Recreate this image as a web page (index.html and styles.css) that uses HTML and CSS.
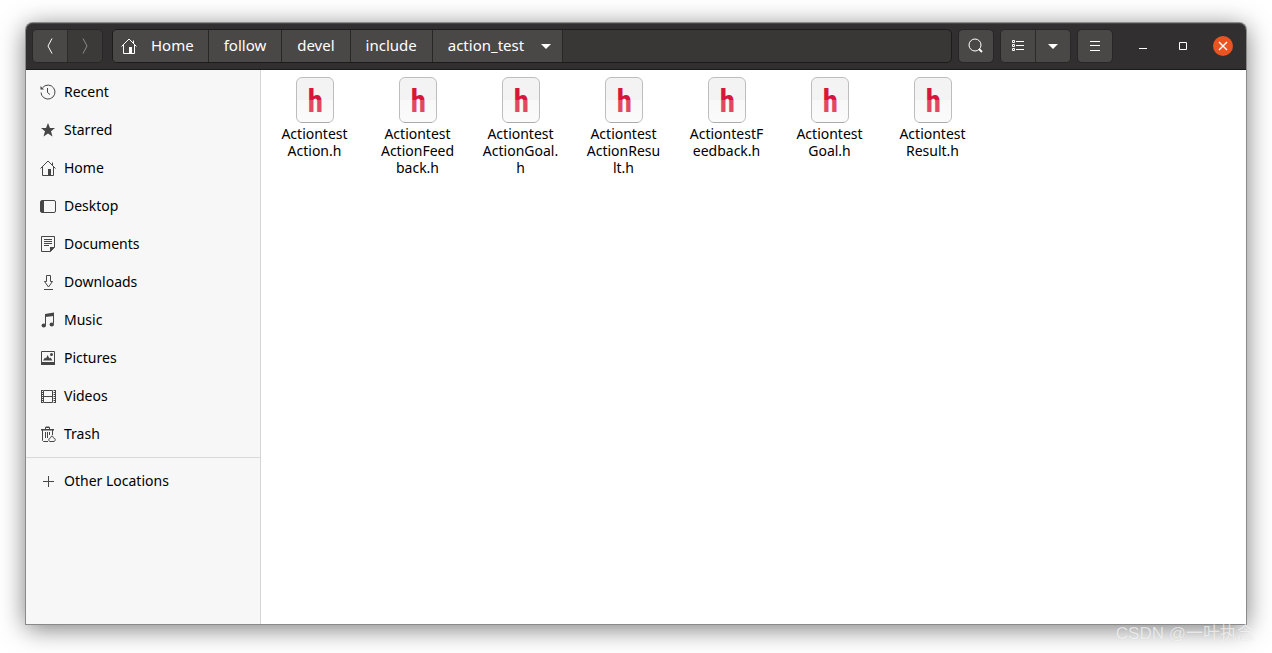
FILE: index.html
```html
<!DOCTYPE html>
<html lang="en">
<head>
<meta charset="utf-8">
<title>action_test</title>
<link rel="stylesheet" href="styles.css">
</head>
<body>
<svg class="defs" aria-hidden="true">
  <defs>
    <linearGradient id="ink" x1="0" y1="0" x2="0" y2="46" gradientUnits="userSpaceOnUse">
      <stop offset="0.5" stop-color="#d8163c"/><stop offset="0.5" stop-color="#e24764"/>
    </linearGradient>
    <linearGradient id="paper" x1="0" y1="0" x2="0" y2="1">
      <stop offset="0.5" stop-color="#f3f3f3"/><stop offset="0.5" stop-color="#f8f8f8"/><stop offset="1" stop-color="#fbfbfb"/>
    </linearGradient>
    <symbol id="file" viewBox="0 0 38 46">
      <rect x="0.5" y="0.5" width="37" height="45" rx="5.5" fill="url(#paper)" stroke="#bdbdbd"/>
      <path d="M5 45.5h28" stroke="#acacac"/>
      <text x="19.5" y="35" text-anchor="middle" class="letter" fill="url(#ink)">h</text>
    </symbol>
    <symbol id="house" viewBox="0 0 16 16">
      <path d="M.5 8.5 8 1l7.500 7.500M2.500 7v8.500h11V7M12.500 2.500v3" fill="none" stroke="currentColor"/>
      <path d="M8 9h3v6.500H8z" fill="currentColor"/>
    </symbol>
  </defs>
</svg>
<div class="window">
  <header class="bar">
    <div class="group">
      <button class="btn" aria-label="Back"><svg class="icon" viewBox="0 0 16 16"><path d="M10 .5 6 8l4 7.500" fill="none" stroke="currentColor"/></svg></button>
      <button class="btn off" aria-label="Forward" disabled><svg class="icon" viewBox="0 0 16 16"><path d="M6 .5 10 8l-4 7.500" fill="none" stroke="currentColor"/></svg></button>
    </div>
    <nav class="path" aria-label="Path">
      <button class="crumb home"><svg class="icon"><use href="#house"/></svg><span class="label">Home</span></button>
      <button class="crumb"><span class="label">follow</span></button>
      <button class="crumb"><span class="label">devel</span></button>
      <button class="crumb"><span class="label">include</span></button>
      <button class="crumb here"><span class="label">action_test</span><svg class="arrow" viewBox="0 0 10 5"><path d="M0 0h10L5 5z" fill="currentColor"/></svg></button>
    </nav>
    <div class="tools">
      <button class="btn solo" aria-label="Search"><svg class="icon" viewBox="0 0 16 16"><circle cx="7" cy="7" r="6" fill="none" stroke="currentColor"/><path d="m11 11 3 3" stroke="currentColor" stroke-width="1.800"/></svg></button>
      <div class="group">
        <button class="btn" aria-label="List view"><svg class="icon" viewBox="0 0 16 16"><path d="M2.500 2.500h2v2h-2zM2.500 6.500h2v2h-2zM2.500 10.500h2v2h-2zM6 3.500h8M6 7.500h8M6 11.500h8" fill="none" stroke="currentColor"/></svg></button>
        <button class="btn" aria-label="View options"><svg class="arrow" viewBox="0 0 10 5"><path d="M0 0h10L5 5z" fill="currentColor"/></svg></button>
      </div>
      <button class="btn solo" aria-label="Menu"><svg class="icon" viewBox="0 0 16 16"><path d="M3 3.500h10M3 7.500h10M3 12.500h10" stroke="currentColor"/></svg></button>
    </div>
    <div class="controls">
      <button class="ctl" aria-label="Minimize"><svg class="icon" viewBox="0 0 16 16"><path d="M4 10.500h8" stroke="currentColor"/></svg></button>
      <button class="ctl" aria-label="Maximize"><svg class="icon" viewBox="0 0 16 16"><path d="M4.500 4.500h7v7h-7z" fill="none" stroke="currentColor"/></svg></button>
      <button class="ctl close" aria-label="Close"><svg class="icon" viewBox="0 0 16 16"><path d="m4 4 8 8M12 4l-8 8" stroke="currentColor" stroke-width="1.400"/></svg></button>
    </div>
  </header>
  <div class="main">
    <aside class="side">
      <a class="place" href="#recent"><svg class="icon" viewBox="0 0 16 16"><path d="M2.600 3.600A7 7 0 1 1 1 8.500" fill="none" stroke="currentColor"/><path d="M.5 2v3.500H4z" fill="currentColor"/><path d="M7.500 4v4.500l2.500 2" fill="none" stroke="currentColor"/></svg><span class="label">Recent</span></a>
      <a class="place" href="#starred"><svg class="icon" viewBox="0 0 16 16"><path d="m8 1 2 5h5l-4 3.300 1.500 5.200L8 11.500l-4.500 3L5 9.300 1 6h5z" fill="currentColor"/></svg><span class="label">Starred</span></a>
      <a class="place" href="#home"><svg class="icon"><use href="#house"/></svg><span class="label">Home</span></a>
      <a class="place" href="#desktop"><svg class="icon" viewBox="0 0 16 16"><rect x=".5" y="2.500" width="15" height="12" rx="1.500" fill="none" stroke="currentColor"/><path d="M1 3h3v11H1z" fill="currentColor"/></svg><span class="label">Desktop</span></a>
      <a class="place" href="#documents"><svg class="icon" viewBox="0 0 16 16"><path d="M1.500.5h13V11l-4 4.500h-9z" fill="none" stroke="currentColor"/><path d="M10 11h5l-5 5zM4 3h8v1H4zM4 5h8v1H4zM4 7h8v1H4zM4 9h5v1H4z" fill="currentColor"/></svg><span class="label">Documents</span></a>
      <a class="place" href="#downloads"><svg class="icon" viewBox="0 0 16 16"><path d="M6.500 1.500h4v6h2l-4 5.500-4-5.500h2zM4 15.500h9" fill="none" stroke="currentColor"/></svg><span class="label">Downloads</span></a>
      <a class="place" href="#music"><svg class="icon" viewBox="0 0 16 16"><path d="M5.500 13V2.500m8 9V1.500" stroke="currentColor"/><path d="M5 2l9-1.500V4L5 5z" fill="currentColor"/><ellipse cx="3.800" cy="13.500" rx="2.200" ry="1.900" fill="currentColor"/><ellipse cx="11.800" cy="12.500" rx="2.200" ry="1.900" fill="currentColor"/></svg><span class="label">Music</span></a>
      <a class="place" href="#pictures"><svg class="icon" viewBox="0 0 16 16"><path d="M1.500 1.500h13v13h-13z" fill="none" stroke="currentColor"/><path d="M1 12h14v3H1zM3 10.500l2-3 1 1L7.500 5l2 3.500 1-1 2 3z" fill="currentColor"/><circle cx="11.500" cy="4.500" r="1.500" fill="currentColor"/></svg><span class="label">Pictures</span></a>
      <a class="place" href="#videos"><svg class="icon" viewBox="0 0 16 16"><path d="M3.500 2.500h9v12h-9zM3.500 8.500h9" fill="none" stroke="currentColor"/><path d="M2 2v13M14.500 2v13" stroke="currentColor" stroke-width="2" stroke-dasharray="1 1"/><path d="M1.500 2v13M15.500 2v13" stroke="currentColor"/></svg><span class="label">Videos</span></a>
      <a class="place" href="#trash"><svg class="icon" viewBox="0 0 16 16"><path d="M1 4.500V3h4V1.500L6 .5h3l1 1V3h4v1.500zM6 2v1h3V2z" fill="currentColor" fill-rule="evenodd"/><path d="M2.500 4v10.500l1 1H8M12.500 4v5M5.500 6v6M7.500 6v6M9.500 6v3" fill="none" stroke="currentColor"/><path d="M9.500 12.500c1.500 0 1-2.500 2.500-2.500s1 2.500 2.500 2.500.5 3-.5 3h-4c-1.500 0-1.500-3-.5-3z" fill="none" stroke="currentColor"/></svg><span class="label">Trash</span></a>
      <a class="place other" href="#other"><svg class="icon" viewBox="0 0 16 16"><path d="M8.500 3v11M3 8.500h11" stroke="currentColor"/></svg><span class="label">Other Locations</span></a>
    </aside>
    <main class="files">
      <div class="file"><svg class="thumb"><use href="#file"/></svg><span>Actiontest<br>Action.h</span></div>
      <div class="file"><svg class="thumb"><use href="#file"/></svg><span>Actiontest<br>ActionFeed<br>back.h</span></div>
      <div class="file"><svg class="thumb"><use href="#file"/></svg><span>Actiontest<br>ActionGoal.<br>h</span></div>
      <div class="file"><svg class="thumb"><use href="#file"/></svg><span>Actiontest<br>ActionResu<br>lt.h</span></div>
      <div class="file"><svg class="thumb"><use href="#file"/></svg><span>ActiontestF<br>eedback.h</span></div>
      <div class="file"><svg class="thumb"><use href="#file"/></svg><span>Actiontest<br>Goal.h</span></div>
      <div class="file"><svg class="thumb"><use href="#file"/></svg><span>Actiontest<br>Result.h</span></div>
    </main>
  </div>
</div>
<div class="mark">CSDN @一叶执念</div>
</body>
</html>
```
FILE: styles.css
```css
* { box-sizing: border-box; }

body {
  margin: 0;
  min-height: 100vh;
  padding: 23px 26px 29px;
  display: flex;
  background: #fff;
  color: #000;
  font: 14px/17px "Noto Sans", sans-serif;
  position: relative;
}

button {
  margin: 0;
  border: 0;
  padding: 0;
  background: none;
  color: inherit;
  font: inherit;
}

svg { display: block; flex: none; }
.defs { position: absolute; width: 0; height: 0; }
.icon { width: 16px; height: 16px; }
.arrow { width: 10px; height: 5px; }
.label { padding-bottom: 2px; }

.window {
  flex: 1;
  min-width: 0;
  display: flex;
  flex-direction: column;
  border-radius: 7px 7px 0 0;
  box-shadow: 0 0 0 1px #8a8a8a, 0 4px 26px rgba(0, 0, 0, 0.55);
}

.bar {
  display: flex;
  align-items: center;
  padding: 6px;
  border-bottom: 1px solid #1b1a1a;
  border-radius: 7px 7px 0 0;
  background: #322f30;
  box-shadow: inset 0 1px #484647;
  color: #fff;
}

.group {
  display: flex;
  border: 1px solid #282626;
  border-radius: 5px;
  overflow: hidden;
}

.btn {
  display: flex;
  align-items: center;
  justify-content: center;
  width: 34px;
  height: 32px;
  background: #4a4846;
}

.btn + .btn { width: 35px; border-left: 1px solid #2c2a2a; }
.off { background: #3c3a39; color: #8b8989; }

.solo {
  width: 36px;
  height: 34px;
  border: 1px solid #282626;
  border-radius: 5px;
}

.path {
  flex: 1;
  display: flex;
  height: 34px;
  margin: 0 6px 0 9px;
  border: 1px solid #1d1b1b;
  border-radius: 5px;
  overflow: hidden;
  background: #393735;
}

.crumb {
  display: flex;
  align-items: center;
  padding: 0 15px;
  border-right: 1px solid #282626;
  background: #4a4846;
  font-size: 15px;
}

.home { gap: 14px; padding: 0 14px 0 8px; }
.here { gap: 17px; padding-right: 11px; }

.tools { display: flex; gap: 6px; }
.controls { display: flex; gap: 20px; margin: 0 7px 0 20px; }

.ctl {
  display: flex;
  align-items: center;
  justify-content: center;
  width: 20px;
  height: 20px;
  border-radius: 50%;
}

.close { background: #e95420; }

.main { flex: 1; display: flex; }

.side {
  width: 235px;
  padding-top: 3px;
  border-right: 1px solid #d5d5d5;
  background: #f7f7f7;
}

.place {
  display: flex;
  align-items: center;
  gap: 8px;
  height: 38px;
  padding-left: 14px;
  color: #000;
  text-decoration: none;
}

.place .icon { color: #464646; }

.other {
  height: 47px;
  margin-top: 4px;
  border-top: 1px solid #d9d9d9;
}

.files {
  flex: 1;
  display: grid;
  grid-template-columns: repeat(auto-fill, 103px);
  align-content: start;
  padding: 7px 2px;
  background: #fff;
}

.file {
  display: flex;
  flex-direction: column;
  align-items: center;
  gap: 2px;
  text-align: center;
}

.thumb { width: 38px; height: 46px; }
.letter { font: bold 31px "Liberation Sans Narrow", "Roboto Condensed", Roboto, sans-serif; }

.mark {
  position: absolute;
  right: 18px;
  bottom: 9px;
  color: rgba(255, 255, 255, 0.7);
  font: 17px/20px "Liberation Sans", "Noto Sans CJK SC", sans-serif;
  text-shadow: 0 0 1px rgba(0, 0, 0, 0.12);
}
```
